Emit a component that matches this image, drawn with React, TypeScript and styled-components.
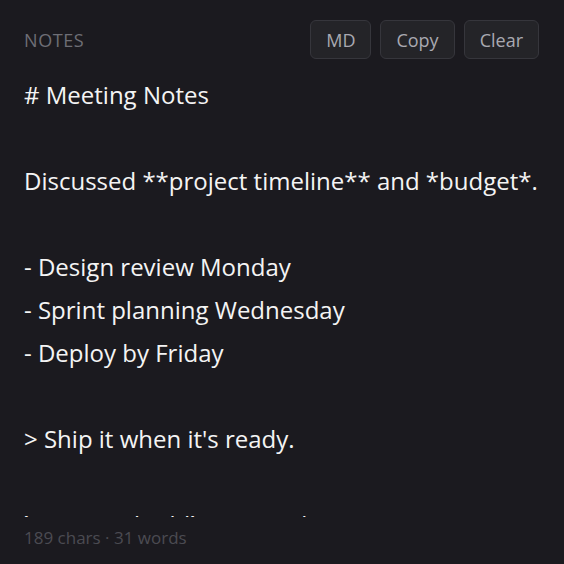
import React, { FunctionComponent, useState } from 'react';
import styled, { createGlobalStyle } from 'styled-components';

const INITIAL_NOTE = [
    '# Meeting Notes',
    '',
    'Discussed **project timeline** and *budget*.',
    '',
    '- Design review Monday',
    '- Sprint planning Wednesday',
    '- Deploy by Friday',
    '',
    "> Ship it when it's ready.",
    '',
    '`npm run build` to compile.'
].join('\n');

const GlobalStyle = createGlobalStyle`
    html, body {
        margin: 0;
        padding: 0;
        background: #1b1a1f;
    }

    * {
        box-sizing: border-box;
    }
`;

const StyledNotes = styled.div`
    display: flex;
    flex-direction: column;
    height: 100vh;
    padding: 20px 25px 15px 24px;
    font-family: "Open Sans", "Noto Sans", sans-serif;
    color: #f4f4f4;
`;

const StyledHeader = styled.header`
    display: flex;
    align-items: center;
    justify-content: space-between;
    height: 39px;
`;

const StyledTitle = styled.div`
    font-size: 18px;
    letter-spacing: 0.6px;
    text-transform: uppercase;
    color: #6e6e75;
`;

const StyledActions = styled.div`
    display: flex;
    gap: 9px;
`;

const StyledButton = styled.button`
    height: 39px;
    padding: 0 15px;
    border: 1px solid #36363c;
    border-radius: 6px;
    background: #242428;
    color: #a9a9b1;
    font-family: inherit;
    font-size: 18px;
    cursor: pointer;

    &:hover {
        background: #2b2b30;
    }
`;

const StyledEditor = styled.textarea`
    flex: 1;
    margin-top: 14px;
    padding: 0;
    border: none;
    outline: none;
    resize: none;
    overflow: hidden;
    background: transparent;
    color: inherit;
    font-family: inherit;
    font-size: 24px;
    line-height: 43px;
`;

const StyledFooter = styled.footer`
    margin-top: 10px;
    font-size: 17px;
    line-height: 22px;
    color: #4b4b52;
`;

const countWords = (text: string): number => text.split(/\s+/).filter(Boolean).length;

const App: FunctionComponent = () => {
    const [note, setNote] = useState(INITIAL_NOTE);

    const copyNote = () => {
        navigator.clipboard?.writeText(note).catch(() => undefined);
    };

    return (
        <>
            <GlobalStyle />
            <StyledNotes>
                <StyledHeader>
                    <StyledTitle>Notes</StyledTitle>
                    <StyledActions>
                        <StyledButton type="button">MD</StyledButton>
                        <StyledButton type="button" onClick={copyNote}>Copy</StyledButton>
                        <StyledButton type="button" onClick={() => setNote('')}>Clear</StyledButton>
                    </StyledActions>
                </StyledHeader>
                <StyledEditor
                    value={note}
                    spellCheck={false}
                    onChange={(event) => setNote(event.target.value)}
                />
                <StyledFooter>
                    {note.length} chars · {countWords(note)} words
                </StyledFooter>
            </StyledNotes>
        </>
    );
};

export default App;
